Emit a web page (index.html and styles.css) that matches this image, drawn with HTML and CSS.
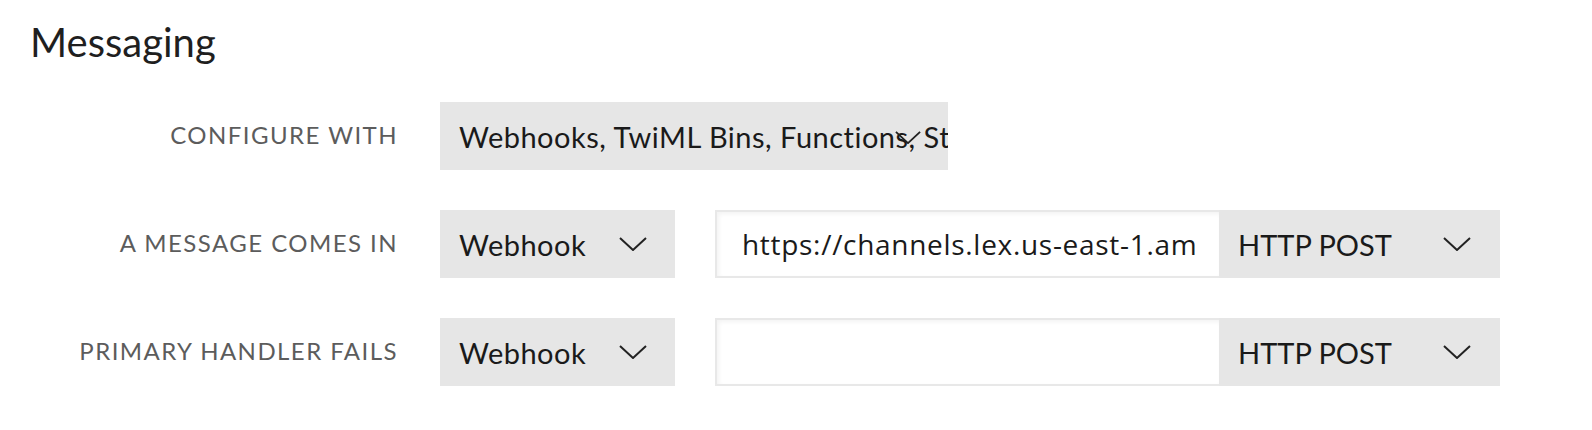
FILE: index.html
```html
<!DOCTYPE html>
<html>
<head>
<meta charset="utf-8">
<link rel="stylesheet" href="styles.css">
</head>
<body>
<section class="panel">
  <h1 class="title">Messaging</h1>
  <div class="form">
    <div class="row">
      <div class="label">CONFIGURE WITH</div>
      <div class="controls">
        <div class="select select-wide">
          <span class="select-text">Webhooks, TwiML Bins, Functions, Studio, or Proxy</span>
          <svg class="chev chev-wide" viewBox="0 0 28 14" width="26" height="13"><path d="M1 1 L14 13 L27 1" fill="none" stroke="#222" stroke-width="2"/></svg>
        </div>
      </div>
    </div>
    <div class="row">
      <div class="label">A MESSAGE COMES IN</div>
      <div class="controls">
        <div class="select select-type">
          <span class="select-text">Webhook</span>
          <svg class="chev" viewBox="0 0 28 14" width="28" height="14"><path d="M1 1 L14 13 L27 1" fill="none" stroke="#222" stroke-width="2"/></svg>
        </div>
        <div class="url-group">
          <div class="input"><span class="input-text">https://channels.lex.us-east-1.amazonaws.com/twilio-sms</span></div>
          <div class="select select-method">
            <span class="select-text">HTTP POST</span>
            <svg class="chev" viewBox="0 0 28 14" width="28" height="14"><path d="M1 1 L14 13 L27 1" fill="none" stroke="#222" stroke-width="2"/></svg>
          </div>
        </div>
      </div>
    </div>
    <div class="row">
      <div class="label">PRIMARY HANDLER FAILS</div>
      <div class="controls">
        <div class="select select-type">
          <span class="select-text">Webhook</span>
          <svg class="chev" viewBox="0 0 28 14" width="28" height="14"><path d="M1 1 L14 13 L27 1" fill="none" stroke="#222" stroke-width="2"/></svg>
        </div>
        <div class="url-group">
          <div class="input"><span class="input-text"></span></div>
          <div class="select select-method">
            <span class="select-text">HTTP POST</span>
            <svg class="chev" viewBox="0 0 28 14" width="28" height="14"><path d="M1 1 L14 13 L27 1" fill="none" stroke="#222" stroke-width="2"/></svg>
          </div>
        </div>
      </div>
    </div>
  </div>
</section>
</body>
</html>
```
FILE: styles.css
```css
html, body {
  margin: 0;
  padding: 0;
  background: #fff;
}
body {
  font-family: Lato, "Open Sans", sans-serif;
  font-variant-ligatures: none;
  color: #222;
}
.panel {
  padding: 18px 0 0 30px;
}
.title {
  margin: 0;
  font-size: 40px;
  font-weight: 400;
  line-height: 48px;
  color: #1f1f1f;
}
.form {
  margin-top: 36px;
  display: flex;
  flex-direction: column;
  gap: 40px;
}
.row {
  display: flex;
  align-items: center;
  height: 68px;
}
.label {
  width: 368px;
  text-align: right;
  font-size: 24px;
  letter-spacing: 1.45px;
  color: #5c5c5c;
  margin-right: 42px;
  padding-bottom: 4px;
}
.controls {
  display: flex;
  gap: 40px;
  height: 100%;
}
.select {
  position: relative;
  background: #e6e6e6;
  height: 100%;
  display: flex;
  align-items: center;
  padding-left: 19px;
  box-sizing: border-box;
  overflow: hidden;
  font-size: 29px;
  color: #1a1a1a;
}
.select-text {
  white-space: nowrap;
}
.select-wide,
.select-type {
  letter-spacing: 0.5px;
}
.select-wide {
  width: 508px;
}
.select-type {
  width: 235px;
}
.select-type .chev {
  position: absolute;
  right: 28px;
  top: 27px;
}
.chev-wide {
  position: absolute;
  left: 455px;
  top: 29px;
}
.url-group {
  display: flex;
  height: 100%;
}
.input {
  width: 504px;
  height: 100%;
  box-sizing: border-box;
  border: 2px solid #e8e8e8;
  border-right: none;
  box-shadow: inset 2px 2px 4px rgba(0,0,0,0.05);
  background: #fff;
  display: flex;
  align-items: center;
  padding: 0 24px 0 25px;
  font-family: "Open Sans", sans-serif;
  font-size: 28px;
  letter-spacing: 0.7px;
  color: #1a1a1a;
}
.input-text {
  flex: 1;
  min-width: 0;
  overflow: hidden;
  white-space: nowrap;
}
.select-method {
  width: 281px;
}
.select-method .chev {
  position: absolute;
  right: 29px;
  top: 27px;
}
```
